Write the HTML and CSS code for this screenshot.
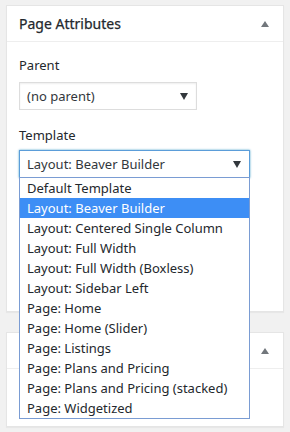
FILE: index.html
```html
<!DOCTYPE html>
<html lang="en">
<head>
  <meta charset="UTF-8" />
  <title>Page Attributes</title>
  <link rel="stylesheet" href="styles.css">
</head>
<body>

  <div class="postbox">
    <div class="postbox-head">
      <h2>Page Attributes</h2>
      <span class="toggle-arrow"></span>
    </div>
    <div class="inside">
      <p class="label">Parent</p>
      <div class="select parent-select">
        <span>(no parent)</span>
        <span class="caret"></span>
      </div>

      <p class="label template-label">Template</p>
      <div class="template-wrap">
        <div class="select template-select focused">
          <span>Layout: Beaver Builder</span>
          <span class="caret"></span>
        </div>

        <ul class="dropdown">
          <li>Default Template</li>
          <li class="active">Layout: Beaver Builder</li>
          <li>Layout: Centered Single Column</li>
          <li>Layout: Full Width</li>
          <li>Layout: Full Width (Boxless)</li>
          <li>Layout: Sidebar Left</li>
          <li>Page: Home</li>
          <li>Page: Home (Slider)</li>
          <li>Page: Listings</li>
          <li>Page: Plans and Pricing</li>
          <li>Page: Plans and Pricing (stacked)</li>
          <li>Page: Widgetized</li>
        </ul>
      </div>
    </div>
  </div>

  <div class="postbox second">
    <div class="postbox-head">
      <span></span>
      <span class="toggle-arrow"></span>
    </div>
  </div>

</body>
</html>
```

FILE: styles.css
```css
body {
  margin: 0;
  padding: 5px 6px;
  background: #f1f1f1;
  font-family: "Noto Sans", "Open Sans", sans-serif;
  font-size: 13px;
  color: #23282d;
}

.postbox {
  background: #fff;
  border: 1px solid #e5e5e5;
  box-shadow: 0 1px 1px rgba(0,0,0,0.04);
  height: 307px;
  box-sizing: border-box;
}
.postbox.second {
  margin-top: 20px;
  height: 95px;
}

.postbox-head {
  display: flex;
  align-items: center;
  justify-content: space-between;
  height: 35px;
  padding: 0 12px;
  border-bottom: 1px solid #eee;
}
.postbox-head h2 {
  margin: 0;
  font-size: 14px;
  font-weight: 400;
  color: #23282d;
  -webkit-text-stroke: 0.25px #23282d;
}
.toggle-arrow {
  width: 0;
  height: 0;
  border-left: 4px solid transparent;
  border-right: 4px solid transparent;
  border-bottom: 6px solid #72777c;
  margin-right: 2px;
}

.inside {
  padding: 0 12px;
}

.label {
  margin: 0;
  padding-top: 14px;
  line-height: 18px;
  color: #23282d;
}
.template-label {
  padding-top: 16px;
}

.select {
  display: flex;
  align-items: center;
  justify-content: space-between;
  box-sizing: border-box;
  height: 28px;
  padding: 0 7px;
  border: 1px solid #ddd;
  box-shadow: inset 0 1px 2px rgba(0,0,0,0.07);
  background: #fff;
  color: #32373c;
}
.parent-select {
  width: 178px;
  margin-top: 8px;
}
.template-wrap {
  position: relative;
  margin-top: 6px;
}
.template-select {
  width: 231px;
}
.focused {
  border-color: #5b9dd9;
  box-shadow: 0 0 2px rgba(30,140,190,0.8);
}
.caret {
  width: 0;
  height: 0;
  border-left: 4px solid transparent;
  border-right: 4px solid transparent;
  border-top: 7px solid #32373c;
  margin-right: 1px;
}

.dropdown {
  position: absolute;
  top: 27px;
  left: 0;
  width: 231px;
  box-sizing: border-box;
  margin: 0;
  padding: 0;
  list-style: none;
  background: #fff;
  border: 1px solid #7a9cd3;
  z-index: 2;
}
.dropdown li {
  height: 20px;
  line-height: 20px;
  padding-left: 7px;
  color: #23282d;
  white-space: nowrap;
}
.dropdown li.active {
  background: #3d8ef5;
  color: #fff;
}
```
